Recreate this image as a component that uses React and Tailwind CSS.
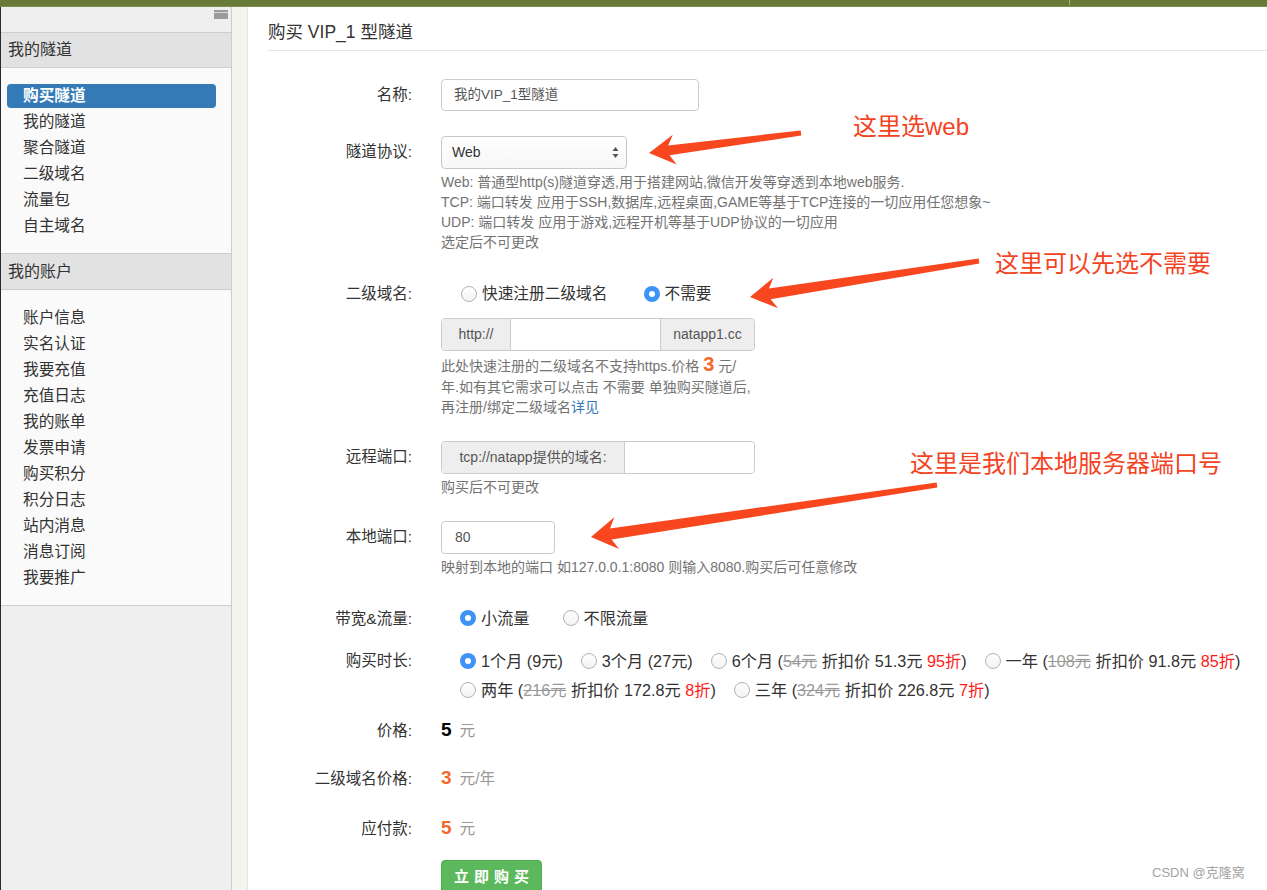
import React from "react";

const FONT = "font-['Liberation_Sans','Noto_Sans_CJK_SC',sans-serif]";

function Radio({ on }) {
  return on ? (
    <span className="w-[16px] h-[16px] rounded-full bg-[#3d94f6] flex items-center justify-center shrink-0">
      <span className="w-[6px] h-[6px] rounded-full bg-white" />
    </span>
  ) : (
    <span className="w-[16px] h-[16px] rounded-full border border-[#b3b3b3] bg-gradient-to-b from-white to-[#f2f2f2] shrink-0" />
  );
}

function Label({ children, h }) {
  return (
    <div
      className={
        "w-[144px] shrink-0 flex items-center justify-end text-[15.5px] text-[#333] " +
        (h === 29 ? "h-[29px]" : "h-[32px]")
      }
    >
      {children}
    </div>
  );
}

function arrowPoints(T, P, L, W, n, t1, t2) {
  const dx = P[0] - T[0];
  const dy = P[1] - T[1];
  const len = Math.hypot(dx, dy);
  const d = [dx / len, dy / len];
  const nr = [-d[1], d[0]];
  const B = [P[0] - d[0] * L, P[1] - d[1] * L];
  const N = [P[0] - d[0] * (L - n), P[1] - d[1] * (L - n)];
  const pts = [
    [T[0] + nr[0] * t1, T[1] + nr[1] * t1],
    [N[0] + nr[0] * t2, N[1] + nr[1] * t2],
    [B[0] + nr[0] * W, B[1] + nr[1] * W],
    P,
    [B[0] - nr[0] * W, B[1] - nr[1] * W],
    [N[0] - nr[0] * t2, N[1] - nr[1] * t2],
    [T[0] - nr[0] * t1, T[1] - nr[1] * t1],
  ];
  return pts.map((p) => p[0].toFixed(1) + "," + p[1].toFixed(1)).join(" ");
}

const tunnelItems = ["购买隧道", "我的隧道", "聚合隧道", "二级域名", "流量包", "自主域名"];
const accountItems = [
  "账户信息",
  "实名认证",
  "我要充值",
  "充值日志",
  "我的账单",
  "发票申请",
  "购买积分",
  "积分日志",
  "站内消息",
  "消息订阅",
  "我要推广",
];

function SideItem({ text, active }) {
  return (
    <div className="h-[26px] py-[1px] px-[6px]">
      <div
        className={
          "w-[209px] h-[24px] pl-[16px] rounded-[4px] flex items-center text-[15.7px] " +
          (active ? "bg-[#337ab7] text-white font-bold" : "text-[#333]")
        }
      >
        {text}
      </div>
    </div>
  );
}

function Strike({ children }) {
  return <span className="line-through text-[#9a9a9a]">{children}</span>;
}
function Red({ children }) {
  return <span className="text-[#ff1a1a]">{children}</span>;
}

function Opt({ on, children, first }) {
  return (
    <span className={"flex items-center whitespace-nowrap " + (first ? "" : "ml-[18px]")}>
      <Radio on={on} />
      <span className="ml-[5px]">{children}</span>
    </span>
  );
}

export default function App() {
  return (
    <div className={"relative w-[1267px] h-[890px] overflow-hidden bg-white " + FONT}>
      {/* top bar */}
      <div className="h-[7px] bg-[#687a37] flex border-b border-[#7d8f4a]">
        <div className="w-[1069px]" />
        <div className="w-[1px] h-[5px] bg-[#a3b46c]" />
      </div>

      <div className="flex h-[883px]">
        {/* sidebar */}
        <div className="w-[232px] shrink-0 border-l border-[#2a2a2a] border-r border-r-[#cdcdcd] bg-[#efefef] flex flex-col">
          <div className="h-[25px] flex justify-end pr-[3px] pt-[3px]">
            <div className="w-[14px] h-[9px] bg-[#9b9b9b] flex flex-col pt-[2px]">
              <div className="h-[1px] bg-[#d8d8d8]" />
            </div>
          </div>
          <div className="h-[36px] border-y border-[#cdcdcd] bg-[#e2e2e2] pl-[7px] flex items-center text-[16px] text-[#333]">
            我的隧道
          </div>
          <div className="bg-[#fafafa] pt-[15px] pb-[14px]">
            {tunnelItems.map((t, i) => (
              <SideItem key={t} text={t} active={i === 0} />
            ))}
          </div>
          <div className="h-[37px] border-y border-[#cdcdcd] bg-[#e2e2e2] pl-[7px] flex items-center text-[16px] text-[#333]">
            我的账户
          </div>
          <div className="bg-[#fafafa] pt-[15px] pb-[14px] border-b border-[#cdcdcd]">
            {accountItems.map((t) => (
              <SideItem key={t} text={t} />
            ))}
          </div>
        </div>

        {/* textured strip */}
        <div className="w-[16px] shrink-0 bg-[#f5f4f0] border-r border-[#e4e4e4]" />

        {/* main */}
        <div className="flex-1 bg-white pl-[20px]">
          <div className="pt-[13px] pb-[6px] border-b border-[#e5e5e5] text-[17.5px] leading-[24px] text-[#333]">
            购买 VIP_1 型隧道
          </div>

          <div className="mt-[28px]">
            {/* name */}
            <div className="flex">
              <Label>名称:</Label>
              <div className="ml-[29px]">
                <div className="w-[258px] h-[32px] border border-[#cccccc] rounded-[4px] px-[12px] flex items-center text-[13.5px] text-[#555]">
                  我的VIP_1型隧道
                </div>
              </div>
            </div>

            {/* protocol */}
            <div className="flex mt-[25px]">
              <Label>隧道协议:</Label>
              <div className="ml-[29px]">
                <div className="w-[186px] h-[33px] border border-[#c8c8c8] rounded-[4px] pl-[10px] pr-[7px] flex items-center justify-between text-[14px] text-[#333] bg-gradient-to-b from-white to-[#f7f7f7]">
                  <span>Web</span>
                  <svg width="7" height="13" viewBox="0 0 7 13">
                    <path d="M3.5 1 L6.5 5 L0.5 5 Z" fill="#555" />
                    <path d="M3.5 12 L6.5 8 L0.5 8 Z" fill="#555" />
                  </svg>
                </div>
                <div className="mt-[3px] text-[14px] leading-[20px] text-[#737373] whitespace-nowrap">
                  <div>Web: 普通型http(s)隧道穿透,用于搭建网站,微信开发等穿透到本地web服务.</div>
                  <div>TCP: 端口转发 应用于SSH,数据库,远程桌面,GAME等基于TCP连接的一切应用任您想象~</div>
                  <div>UDP: 端口转发 应用于游戏,远程开机等基于UDP协议的一切应用</div>
                  <div>选定后不可更改</div>
                </div>
              </div>
            </div>

            {/* subdomain */}
            <div className="flex mt-[26px]">
              <Label>二级域名:</Label>
              <div className="ml-[29px]">
                <div className="h-[32px] flex items-center pl-[20px] text-[15.7px] text-[#333]">
                  <Opt first>快速注册二级域名</Opt>
                  <span className="flex items-center ml-[36px]">
                    <Radio on />
                    <span className="ml-[5px]">不需要</span>
                  </span>
                </div>
                <div className="mt-[8px] w-[314px] h-[33px] border border-[#cccccc] rounded-[4px] flex text-[14px] text-[#555] overflow-hidden">
                  <div className="w-[69px] bg-[#eeeeee] border-r border-[#cccccc] flex items-center justify-center">
                    http://
                  </div>
                  <div className="w-[149px] bg-white" />
                  <div className="flex-1 bg-[#eeeeee] border-l border-[#cccccc] flex items-center justify-center">
                    natapp1.cc
                  </div>
                </div>
                <div className="mt-[4px] text-[14px] leading-[20.5px] text-[#737373] whitespace-nowrap">
                  <div>
                    此处快速注册的二级域名不支持https.价格{" "}
                    <span className="text-[20px] font-bold text-[#f5692c] leading-[18px]">3</span>{" "}
                    元/
                  </div>
                  <div>年.如有其它需求可以点击 不需要 单独购买隧道后,</div>
                  <div>
                    再注册/绑定二级域名<span className="text-[#337ab7]">详见</span>
                  </div>
                </div>
              </div>
            </div>

            {/* remote port */}
            <div className="flex mt-[23px]">
              <Label>远程端口:</Label>
              <div className="ml-[29px]">
                <div className="w-[314px] h-[33px] border border-[#cccccc] rounded-[4px] flex text-[14px] text-[#555] overflow-hidden">
                  <div className="w-[183px] bg-[#eeeeee] border-r border-[#cccccc] flex items-center justify-center">
                    tcp://natapp提供的域名:
                  </div>
                  <div className="flex-1 bg-white" />
                </div>
                <div className="mt-[3px] text-[14px] leading-[20px] text-[#737373]">购买后不可更改</div>
              </div>
            </div>

            {/* local port */}
            <div className="flex mt-[24px]">
              <Label>本地端口:</Label>
              <div className="ml-[29px]">
                <div className="w-[114px] h-[33px] border border-[#cccccc] rounded-[4px] px-[13px] flex items-center text-[14px] text-[#555]">
                  80
                </div>
                <div className="mt-[3px] text-[14px] leading-[20px] text-[#737373] whitespace-nowrap">
                  映射到本地的端口 如127.0.0.1:8080 则输入8080.购买后可任意修改
                </div>
              </div>
            </div>

            {/* bandwidth */}
            <div className="flex mt-[26px]">
              <Label>带宽&amp;流量:</Label>
              <div className="ml-[29px] h-[32px] flex items-center pl-[19px] text-[16.2px] text-[#333]">
                <Opt on first>
                  小流量
                </Opt>
                <span className="flex items-center ml-[33px]">
                  <Radio />
                  <span className="ml-[5px]">不限流量</span>
                </span>
              </div>
            </div>

            {/* duration */}
            <div className="flex mt-[12px]">
              <Label h={29}>购买时长:</Label>
              <div className="ml-[29px] pl-[19px] text-[16.2px] text-[#333]">
                <div className="h-[29px] flex items-center">
                  <Opt on first>
                    1个月 (9元)
                  </Opt>
                  <Opt>3个月 (27元)</Opt>
                  <Opt>
                    6个月 (<Strike>54元</Strike> 折扣价 51.3元 <Red>95折</Red>)
                  </Opt>
                  <Opt>
                    一年 (<Strike>108元</Strike> 折扣价 91.8元 <Red>85折</Red>)
                  </Opt>
                </div>
                <div className="h-[29px] flex items-center">
                  <Opt first>
                    两年 (<Strike>216元</Strike> 折扣价 172.8元 <Red>8折</Red>)
                  </Opt>
                  <Opt>
                    三年 (<Strike>324元</Strike> 折扣价 226.8元 <Red>7折</Red>)
                  </Opt>
                </div>
              </div>
            </div>

            {/* price */}
            <div className="flex mt-[10px]">
              <Label>价格:</Label>
              <div className="ml-[29px] h-[32px] flex items-center">
                <span className="text-[19px] font-bold text-black">5</span>
                <span className="ml-[8px] text-[15.7px] text-[#999]">元</span>
              </div>
            </div>

            <div className="flex mt-[16px]">
              <Label>二级域名价格:</Label>
              <div className="ml-[29px] h-[32px] flex items-center">
                <span className="text-[19px] font-bold text-[#f5692c]">3</span>
                <span className="ml-[8px] text-[15.7px] text-[#999]">元/年</span>
              </div>
            </div>

            <div className="flex mt-[18px]">
              <Label>应付款:</Label>
              <div className="ml-[29px] h-[32px] flex items-center">
                <span className="text-[19px] font-bold text-[#f5692c]">5</span>
                <span className="ml-[8px] text-[15.7px] text-[#999]">元</span>
              </div>
            </div>

            <div className="flex mt-[15px]">
              <div className="w-[144px] shrink-0" />
              <div className="ml-[29px]">
                <div className="w-[101px] h-[36px] rounded-[4px] bg-[#5cb85c] border border-[#4cae4c] flex items-center justify-center text-white text-[15px] font-bold tracking-[5px] pl-[5px]">
                  立即购买
                </div>
              </div>
            </div>
          </div>
        </div>
      </div>

      {/* annotations */}
      <svg className="absolute left-0 top-0 pointer-events-none" width="1267" height="890">
        <polygon points={arrowPoints([801, 133], [649, 153], 26, 15, 6, 2.5, 5)} fill="#f8461f" />
        <polygon points={arrowPoints([979, 261], [750, 297], 26, 15.5, 6, 2.5, 5.5)} fill="#f8461f" />
        <polygon points={arrowPoints([937, 485], [591, 537], 26, 16, 6, 2.5, 5.5)} fill="#f8461f" />
      </svg>
      <div className="absolute left-[853px] top-[115px] text-[24px] leading-[24px] text-[#f3431f] whitespace-nowrap">
        这里选web
      </div>
      <div className="absolute left-[995px] top-[252px] text-[24px] leading-[24px] text-[#f3431f] whitespace-nowrap">
        这里可以先选不需要
      </div>
      <div className="absolute left-[910px] top-[452px] text-[24px] leading-[24px] text-[#f3431f] whitespace-nowrap">
        这里是我们本地服务器端口号
      </div>
      <div className="absolute left-[1152px] top-[865px] text-[13px] leading-[16px] text-[#a3a3a3] whitespace-nowrap">
        CSDN @克隆窝
      </div>
    </div>
  );
}
